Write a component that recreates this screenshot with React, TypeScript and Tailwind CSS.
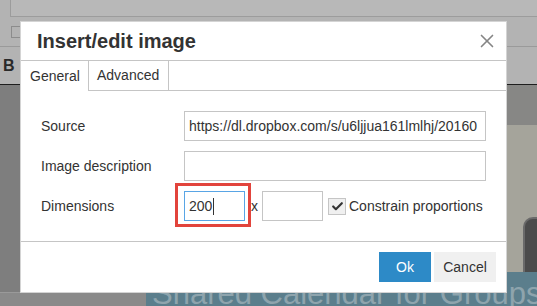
import { X, Check } from 'lucide-react';

const font = { fontFamily: '"Liberation Sans", Arial, sans-serif' };

export default function App() {
  return (
    <div className="relative w-[537px] h-[306px] overflow-hidden bg-[#808080]" style={font}>
      {/* page behind the modal, dimmed */}
      <div className="flex flex-col h-full">
        <div className="h-[85px] bg-[#b3b3b3] flex flex-col">
          <div className="h-[17px] flex">
            <div className="w-[10px]" />
            <div className="flex-1 border-l border-b border-[#9c9c9c] bg-[#b8b8b8]" />
          </div>
          <div className="h-[30px] flex items-center pl-[11px] border-b border-[#9a9a9a]">
            <div className="w-[10px] h-[12px] border border-[#8c8c8c]" />
          </div>
          <div className="flex-1 flex items-center pl-[3px] border-b border-[#1e1e1e]">
            <span className="text-[16px] font-bold text-[#2a2a2a]">B</span>
          </div>
        </div>
        <div className="flex-1 flex">
          <div className="w-[146px] shrink-0 bg-[#7e7e7e] flex flex-col justify-end">
            <div className="h-[14px] bg-[#8a8a8a] border-t border-[#9a9a9a]" />
          </div>
          <div className="flex-1 min-w-0 flex flex-col">
            <div className="h-[187px] flex flex-col bg-[#a5a49b]">
              <div className="h-[40px] bg-[#878785]" />
              <div className="flex-1 flex justify-end items-end">
                <div className="w-[14px] h-[55px] rounded-tl-[10px] bg-[#4b4b4b] border-l-2 border-t-2 border-[#6a6a6a]" />
              </div>
            </div>
            <div className="flex-1 bg-[#5b7e8c] pl-[6px] pt-[12px] overflow-hidden">
              <div className="text-[31px] leading-[20px] text-[#8ea4ad] whitespace-nowrap">Shared Calendar for Groups and</div>
            </div>
          </div>
        </div>
      </div>

      {/* modal */}
      <div className="absolute left-[20px] top-[21px] w-[487px] h-[272px] bg-white border border-[#d4d4d4] flex flex-col text-[#333]">
        <div className="h-[39px] flex items-center justify-between pl-[16px] pr-[8px] border-b border-[#c5c5c5]">
          <span className="text-[20px] font-bold leading-none">Insert/edit image</span>
          <X size={22} strokeWidth={1.8} className="text-[#858585]" />
        </div>
        <div className="h-[30px] flex border-b border-[#c5c5c5]">
          <div className="w-[68px] -mb-px bg-white border-r border-[#c5c5c5] flex items-center pl-[9px] text-[14px]">General</div>
          <div className="w-[80px] border-r border-[#c5c5c5] flex items-center pl-[8px] text-[14px]">Advanced</div>
        </div>
        <div className="flex-1 flex flex-col gap-[10px] pt-[20px] pl-[20px] pr-[20px] border-b border-[#c5c5c5] text-[14px]">
          <div className="h-[30px] flex items-center">
            <span className="w-[143px]">Source</span>
            <div className="flex-1 h-[30px] border border-[#c5c5c5] flex items-center pl-[4px] overflow-hidden whitespace-nowrap">
              https://dl.dropbox.com/s/u6ljjua161lmlhj/20160
            </div>
          </div>
          <div className="h-[30px] flex items-center">
            <span className="w-[143px]">Image description</span>
            <div className="flex-1 h-[30px] border border-[#c5c5c5]" />
          </div>
          <div className="h-[30px] flex items-center">
            <span className="w-[143px]">Dimensions</span>
            <div className="w-[61px] h-[30px] border border-[#59a5e5] flex items-center pl-[4px]">
              200<span className="w-px h-[17px] bg-[#333] ml-px" />
            </div>
            <span className="w-[17px] pl-[6px]">x</span>
            <div className="w-[61px] h-[30px] border border-[#c5c5c5]" />
            <div className="ml-[5px] w-[18px] h-[17px] bg-[#f0f0f0] border border-[#c5c5c5] flex items-center justify-center">
              <Check size={13} strokeWidth={4} className="text-[#333]" />
            </div>
            <span className="ml-[3px]">Constrain proportions</span>
          </div>
        </div>
        <div className="h-[50px] flex items-center justify-end gap-[3px] pr-[10px]">
          <div className="w-[52px] h-[30px] bg-[#2d8ac7] text-white text-[14px] flex items-center justify-center">Ok</div>
          <div className="w-[62px] h-[30px] bg-[#f0f0f0] text-[#333] text-[14px] flex items-center justify-center">Cancel</div>
        </div>
      </div>

      {/* annotation highlight */}
      <div className="absolute left-[175px] top-[183px] w-[76px] h-[44px] border-[3px] border-[#e2443c]" />
    </div>
  );
}
